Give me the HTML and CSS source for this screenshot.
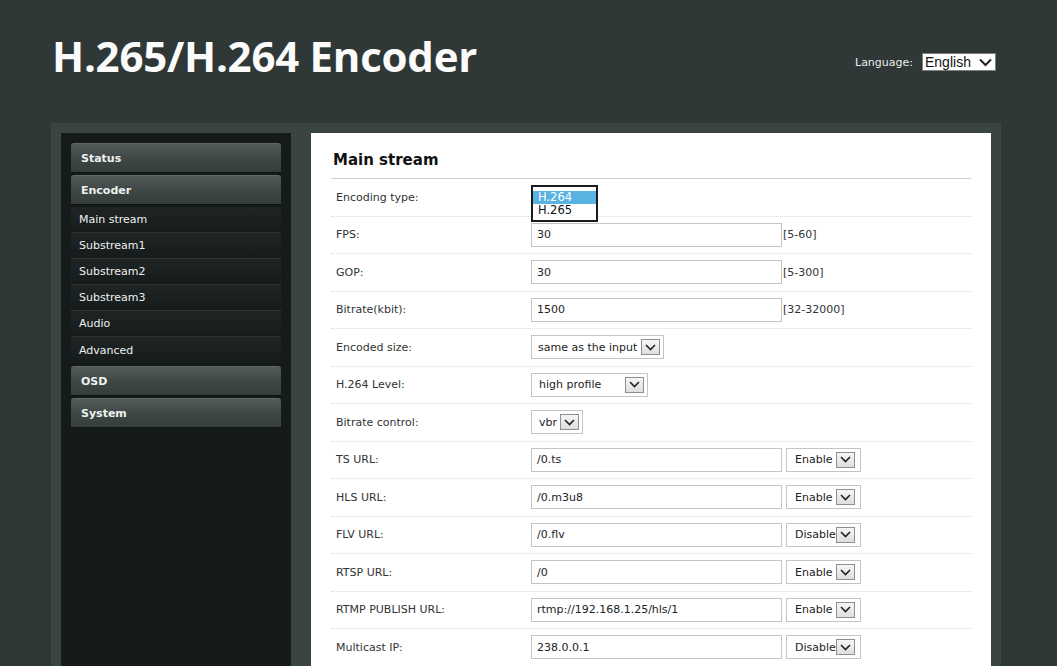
FILE: index.html
```html
<!DOCTYPE html>
<html>
<head>
<meta charset="utf-8">
<title>H.265/H.264 Encoder</title>
<link rel="stylesheet" href="styles.css">
</head>
<body>
<header class="top">
  <h1 class="title">H.265/H.264 Encoder</h1>
  <div class="lang">
    <span class="lang-label">Language:</span>
    <span class="lang-select">English
      <svg class="lang-arrow" width="13" height="9" viewBox="0 0 13 9"><path d="M1 1.5 L6.5 7 L12 1.5" fill="none" stroke="#222" stroke-width="2"/></svg>
    </span>
  </div>
</header>
<div class="frame">
  <nav class="sidebar">
    <div class="nav-head">Status</div>
    <div class="nav-head">Encoder</div>
    <div class="nav-sub">Main stream</div>
    <div class="nav-sub">Substream1</div>
    <div class="nav-sub">Substream2</div>
    <div class="nav-sub">Substream3</div>
    <div class="nav-sub">Audio</div>
    <div class="nav-sub last">Advanced</div>
    <div class="nav-head">OSD</div>
    <div class="nav-head">System</div>
  </nav>
  <main class="panel">
    <h2 class="panel-title">Main stream</h2>
    <div class="row">
      <div class="label">Encoding type:</div>
      <div class="listbox">
        <div class="opt sel">H.264</div>
        <div class="opt">H.265</div>
      </div>
    </div>
    <div class="row">
      <div class="label">FPS:</div>
      <div class="input">30</div><span class="range">[5-60]</span>
    </div>
    <div class="row">
      <div class="label">GOP:</div>
      <div class="input">30</div><span class="range">[5-300]</span>
    </div>
    <div class="row">
      <div class="label">Bitrate(kbit):</div>
      <div class="input">1500</div><span class="range">[32-32000]</span>
    </div>
    <div class="row">
      <div class="label">Encoded size:</div>
      <div class="select w-size"><span class="sel-text">same as the input</span><span class="btn"><svg width="11" height="7" viewBox="0 0 11 7"><path d="M1 1 L5.5 5.5 L10 1" fill="none" stroke="#222" stroke-width="1.6"/></svg></span></div>
    </div>
    <div class="row">
      <div class="label">H.264 Level:</div>
      <div class="select w-level"><span class="sel-text">high profile</span><span class="btn"><svg width="11" height="7" viewBox="0 0 11 7"><path d="M1 1 L5.5 5.5 L10 1" fill="none" stroke="#222" stroke-width="1.6"/></svg></span></div>
    </div>
    <div class="row">
      <div class="label">Bitrate control:</div>
      <div class="select w-vbr"><span class="sel-text">vbr</span><span class="btn"><svg width="11" height="7" viewBox="0 0 11 7"><path d="M1 1 L5.5 5.5 L10 1" fill="none" stroke="#222" stroke-width="1.6"/></svg></span></div>
    </div>
    <div class="row">
      <div class="label">TS URL:</div>
      <div class="input">/0.ts</div>
      <div class="select w-en"><span class="sel-text">Enable</span><span class="btn"><svg width="11" height="7" viewBox="0 0 11 7"><path d="M1 1 L5.5 5.5 L10 1" fill="none" stroke="#222" stroke-width="1.6"/></svg></span></div>
    </div>
    <div class="row">
      <div class="label">HLS URL:</div>
      <div class="input">/0.m3u8</div>
      <div class="select w-en"><span class="sel-text">Enable</span><span class="btn"><svg width="11" height="7" viewBox="0 0 11 7"><path d="M1 1 L5.5 5.5 L10 1" fill="none" stroke="#222" stroke-width="1.6"/></svg></span></div>
    </div>
    <div class="row">
      <div class="label">FLV URL:</div>
      <div class="input">/0.flv</div>
      <div class="select w-en"><span class="sel-text">Disable</span><span class="btn"><svg width="11" height="7" viewBox="0 0 11 7"><path d="M1 1 L5.5 5.5 L10 1" fill="none" stroke="#222" stroke-width="1.6"/></svg></span></div>
    </div>
    <div class="row">
      <div class="label">RTSP URL:</div>
      <div class="input">/0</div>
      <div class="select w-en"><span class="sel-text">Enable</span><span class="btn"><svg width="11" height="7" viewBox="0 0 11 7"><path d="M1 1 L5.5 5.5 L10 1" fill="none" stroke="#222" stroke-width="1.6"/></svg></span></div>
    </div>
    <div class="row">
      <div class="label">RTMP PUBLISH URL:</div>
      <div class="input">rtmp://192.168.1.25/hls/1</div>
      <div class="select w-en"><span class="sel-text">Enable</span><span class="btn"><svg width="11" height="7" viewBox="0 0 11 7"><path d="M1 1 L5.5 5.5 L10 1" fill="none" stroke="#222" stroke-width="1.6"/></svg></span></div>
    </div>
    <div class="row">
      <div class="label">Multicast IP:</div>
      <div class="input">238.0.0.1</div>
      <div class="select w-en"><span class="sel-text">Disable</span><span class="btn"><svg width="11" height="7" viewBox="0 0 11 7"><path d="M1 1 L5.5 5.5 L10 1" fill="none" stroke="#222" stroke-width="1.6"/></svg></span></div>
    </div>
  </main>
</div>
</body>
</html>
```

FILE: styles.css
```css
* { box-sizing: border-box; }
html, body { margin: 0; padding: 0; }
body {
  background: #2f3837;
  font-family: "DejaVu Sans", Verdana, sans-serif;
  font-size: 11px;
  color: #222;
  height: 666px;
  overflow: hidden;
}
.top {
  height: 123px;
  display: flex;
  align-items: flex-start;
  justify-content: space-between;
  padding: 0 61px 0 52px;
}
.title {
  margin: 0;
  padding-top: 31px;
  font-family: "Open Sans", sans-serif;
  font-weight: 700;
  font-size: 42px;
  line-height: 50px;
  color: #fbfbfb;
  letter-spacing: -0.25px;
}
.lang {
  display: flex;
  align-items: center;
  margin-top: 53px;
  gap: 9px;
}
.lang-label {
  color: #e8ecea;
  font-size: 11px;
}
.lang-select {
  display: flex;
  align-items: center;
  justify-content: space-between;
  width: 74px;
  height: 18px;
  background: #fff;
  border: 1px solid #7a8280;
  font-family: "Liberation Sans", Arial, sans-serif;
  font-size: 14px;
  color: #111;
  padding: 0 3px 0 2px;
}
.frame {
  display: flex;
  align-items: stretch;
  margin-left: 51px;
  width: 950px;
  height: 543px;
  padding: 10px 10px 0 10px;
  background: #3a4442;
  gap: 20px;
}
.sidebar {
  width: 230px;
  background: #151a1a;
  padding: 10px;
  display: flex;
  flex-direction: column;
}
.nav-head {
  height: 30px;
  margin-bottom: 2px;
  padding-left: 10px;
  display: flex;
  align-items: center;
  font-weight: 700;
  font-size: 11px;
  color: #eef1ef;
  border-radius: 3px 3px 0 0;
  background: linear-gradient(#535b59, #3d4644 55%, #363e3c);
  border-top: 1px solid #5f6866;
  border-bottom: 1px solid #0e1212;
}
.nav-sub {
  height: 26px;
  padding-left: 8px;
  display: flex;
  align-items: center;
  color: #eef1ef;
  font-size: 11px;
  background: linear-gradient(#1f2525, #161b1b);
  border-bottom: 1px solid #2d3434;
}
.nav-sub.last { border-bottom: none; margin-bottom: 3px; }
.panel {
  width: 680px;
  background: #fff;
  padding: 0 20px;
}
.panel-title {
  margin: 0;
  padding: 17px 2px 8px;
  font-size: 15px;
  line-height: 20px;
  font-weight: 700;
  color: #111;
  border-bottom: 1px solid #d0d0d0;
}
.row {
  height: 37.5px;
  display: flex;
  align-items: center;
  border-bottom: 1px dotted #d9d9d9;
  color: #333;
}
.label {
  width: 200px;
  padding-left: 5px;
  flex: none;
}
.input {
  width: 251px;
  height: 24px;
  border: 1px solid #c4c4c4;
  padding-left: 5px;
  display: flex;
  align-items: center;
  color: #222;
  flex: none;
}
.range { margin-left: 1px; color: #333; }
.select {
  height: 24px;
  border: 1px solid #c4c4c4;
  display: flex;
  align-items: center;
  justify-content: space-between;
  padding: 0 3px 0 7px;
  color: #222;
  flex: none;
}
.w-size { width: 133px; padding-left: 6px; }
.w-level { width: 117px; }
.w-vbr { width: 52px; }
.w-en { width: 75px; margin-left: 4px; padding-left: 8px; padding-right: 5px; }
.btn {
  width: 19px;
  height: 16px;
  border: 1px solid #8f8f8f;
  background: linear-gradient(#f6f6f6, #dedede);
  display: flex;
  align-items: center;
  justify-content: center;
}
.listbox {
  align-self: flex-start;
  margin-top: 6px;
  width: 67px;
  height: 37px;
  border: 2px solid #1c1c1c;
  background: #fff;
  padding: 4px 0 0 0;
  font-size: 11.5px;
  position: relative;
  z-index: 2;
}
.opt { height: 13px; line-height: 13px; padding-left: 5px; color: #111; }
.opt.sel { background: #58b3e2; color: #fff; }
```
